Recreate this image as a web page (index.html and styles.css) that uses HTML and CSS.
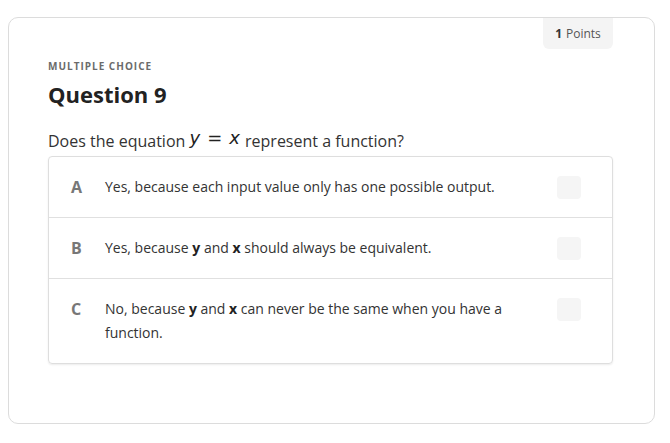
FILE: index.html
```html
<!DOCTYPE html>
<html>
<head>
<meta charset="utf-8">
<link rel="stylesheet" href="styles.css">
</head>
<body>
<div class="card">
  <div class="top">
    <div class="points"><b>1</b> Points</div>
  </div>
  <div class="label">MULTIPLE CHOICE</div>
  <h1 class="title">Question 9</h1>
  <p class="question">Does the equation <span class="math"><i>y</i><span class="eq">=</span><i>x</i></span> represent a function?</p>
  <div class="options">
    <div class="opt">
      <div class="letter">A</div>
      <div class="text">Yes, because each input value only has one possible output.</div>
      <div class="box"></div>
    </div>
    <div class="opt">
      <div class="letter">B</div>
      <div class="text">Yes, because <b>y</b> and <b>x</b> should always be equivalent.</div>
      <div class="box"></div>
    </div>
    <div class="opt">
      <div class="letter">C</div>
      <div class="text">No, because <b>y</b> and <b>x</b> can never be the same when you have a function.</div>
      <div class="box"></div>
    </div>
  </div>
</div>
</body>
</html>
```

FILE: styles.css
```css
* { box-sizing: border-box; }
html, body { margin: 0; padding: 0; background: #fff; }
body { font-family: "Open Sans", "Noto Sans", sans-serif; color: #333; }
.card {
  margin: 17px 0 0 8px;
  width: 647px;
  height: 407px;
  border: 1px solid #dcdcdc;
  border-radius: 10px;
  padding: 0 41px 0 39px;
}
.top { display: flex; justify-content: flex-end; }
.points {
  height: 31px;
  width: 70px;
  background: #f4f4f4;
  border-radius: 0 0 6px 6px;
  font-size: 12px;
  color: #555;
  display: flex;
  align-items: center;
  justify-content: center;
  gap: 4px;
}
.points b { color: #333; font-weight: 700; }
.label {
  margin-top: 10px;
  font-size: 10px;
  line-height: 14px;
  font-weight: 700;
  letter-spacing: 1px;
  color: #6b6b6b;
}
.title {
  margin: 6px 0 0 0;
  font-size: 22px;
  line-height: 30px;
  font-weight: 700;
  color: #222;
}
.question {
  margin: 20px 0 0 0;
  font-size: 16px;
  line-height: 24px;
  color: #333;
}
.math {
  font-family: "DejaVu Sans", sans-serif;
  font-size: 18px;
  position: relative;
  top: -3px;
  margin: 0 1px 0 0;
  color: #222;
}
.math .eq { margin: 0 7px; font-style: normal; }
.options {
  margin-top: 3px;
  border: 1px solid #dedede;
  border-radius: 4px;
  box-shadow: 0 1px 2px rgba(0,0,0,0.08);
}
.opt {
  display: flex;
  align-items: flex-start;
  padding: 18px 31px 18px 22px;
  border-top: 1px solid #e0e0e0;
}
.opt:first-child { border-top: none; }
.letter {
  width: 34px;
  font-size: 16px;
  line-height: 24px;
  font-weight: 700;
  color: #777;
}
.text {
  flex: 1;
  font-size: 14px;
  line-height: 24px;
  color: #333;
  padding-right: 30px;
}
.text b { font-weight: 700; color: #222; }
.box {
  width: 24px;
  height: 23px;
  margin-top: 1px;
  background: #f5f5f5;
  border-radius: 4px;
}
```
